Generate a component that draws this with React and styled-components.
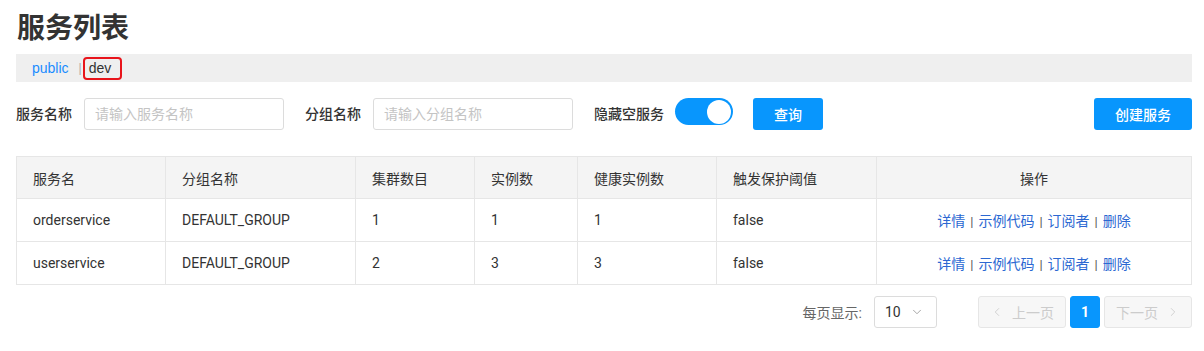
import React from 'react';
import styled, { createGlobalStyle } from 'styled-components';
import { ChevronDown, ChevronLeft, ChevronRight } from 'lucide-react';

const GlobalStyle = createGlobalStyle`
  body {
    margin: 0;
    background: #fff;
    font-family: Roboto, "Noto Sans CJK SC", sans-serif;
    color: #333;
  }
`;

const Page = styled.div`
  padding: 8px 12px 0 16px;
`;

const Title = styled.h1`
  margin: 0 0 10px 1px;
  font-size: 28px;
  line-height: 36px;
  font-weight: bold;
  color: #333;
  font-family: "Noto Sans CJK SC", sans-serif;
`;

const NamespaceBar = styled.div`
  display: flex;
  align-items: center;
  height: 28px;
  background: #efefef;
  padding-left: 16px;
  font-family: "Liberation Sans", "Noto Sans CJK SC", sans-serif;
  font-size: 14px;
`;

const NsLink = styled.span`
  color: ${p => (p.$active ? '#333' : '#1a8cff')};
  line-height: 19px;
  border: ${p => (p.$active ? '2px solid #e8141b' : 'none')};
  border-radius: 4px;
  padding: ${p => (p.$active ? '0 9px 0 4px' : '0')};
`;

const NsSep = styled.span`
  color: #aaa;
  font-size: 12px;
  margin: 0 1px 0 10px;
`;

const FilterRow = styled.div`
  display: flex;
  align-items: flex-start;
  margin-top: 16px;
  height: 32px;
`;

const FieldLabel = styled.label`
  font-size: 14px;
  line-height: 32px;
  font-weight: 500;
  color: #333;
  margin-right: ${p => p.$gap || 12}px;
`;

const TextInput = styled.input`
  box-sizing: border-box;
  width: 200px;
  height: 32px;
  border: 1px solid #dcdcdc;
  border-radius: 3px;
  padding: 0 10px;
  font-size: 14px;
  font-family: Roboto, "Noto Sans CJK SC", sans-serif;
  margin-right: 21px;
  outline: none;
  &::placeholder {
    color: #c4c4c4;
  }
`;

const Switch = styled.div`
  box-sizing: border-box;
  width: 58px;
  height: 27px;
  border-radius: 14px;
  background: #0896fd;
  position: relative;
  margin-right: 20px;
  &::after {
    content: '';
    position: absolute;
    right: 2px;
    top: 1.5px;
    width: 24px;
    height: 24px;
    border-radius: 50%;
    background: #fff;
  }
`;

const PrimaryButton = styled.button`
  height: 32px;
  width: ${p => p.$width}px;
  border: none;
  border-radius: 3px;
  background: #0896fd;
  color: #fff;
  font-size: 14px;
  font-weight: 500;
  font-family: "Noto Sans CJK SC", sans-serif;
  padding: 0;
  margin-left: ${p => (p.$right ? 'auto' : '0')};
`;

const Table = styled.table`
  width: 100%;
  margin-top: 26px;
  border-collapse: collapse;
  font-size: 14px;
  color: #333;
`;

const Th = styled.th`
  height: 42px;
  background: #f4f4f4;
  border: 1px solid #e6e6e6;
  font-weight: normal;
  text-align: ${p => (p.$center ? 'center' : 'left')};
  padding: 0 16px;
  width: ${p => p.$width}px;
  box-sizing: border-box;
`;

const Td = styled.td`
  height: 42px;
  border: 1px solid #e6e6e6;
  text-align: ${p => (p.$center ? 'center' : 'left')};
  padding: 0 16px;
`;

const ActionLink = styled.a`
  color: #2c68d2;
  text-decoration: none;
`;

const ActionSep = styled.span`
  color: #555;
  margin: 0 5px;
  font-size: 13px;
`;

const Footer = styled.div`
  display: flex;
  justify-content: flex-end;
  align-items: center;
  margin-top: 11px;
`;

const PageSizeLabel = styled.span`
  font-size: 14px;
  color: #666;
  margin-right: 12px;
`;

const Select = styled.div`
  box-sizing: border-box;
  display: flex;
  align-items: center;
  justify-content: space-between;
  width: 63px;
  height: 32px;
  border: 1px solid #dcdcdc;
  border-radius: 3px;
  padding: 0 12px 0 10px;
  font-size: 14px;
  color: #333;
  margin-right: 41px;
`;

const Pager = styled.div`
  display: flex;
  gap: 4px;
`;

const PageButton = styled.div`
  box-sizing: border-box;
  display: flex;
  align-items: center;
  justify-content: center;
  gap: 8px;
  height: 32px;
  width: ${p => p.$width}px;
  border-radius: 3px;
  font-size: 14px;
  border: 1px solid ${p => (p.$current ? '#0896fd' : '#e6e6e6')};
  background: ${p => (p.$current ? '#0896fd' : '#f7f7f7')};
  color: ${p => (p.$current ? '#fff' : '#ccc')};
  font-weight: ${p => (p.$current ? 'bold' : 'normal')};
`;

const rows = [
  { name: 'orderservice', group: 'DEFAULT_GROUP', clusters: 1, instances: 1, healthy: 1, threshold: 'false' },
  { name: 'userservice', group: 'DEFAULT_GROUP', clusters: 2, instances: 3, healthy: 3, threshold: 'false' },
];

const actions = ['详情', '示例代码', '订阅者', '删除'];

export default function App() {
  return (
    <Page>
      <GlobalStyle />
      <Title>服务列表</Title>
      <NamespaceBar>
        <NsLink>public</NsLink>
        <NsSep>|</NsSep>
        <NsLink $active>dev</NsLink>
      </NamespaceBar>

      <FilterRow>
        <FieldLabel>服务名称</FieldLabel>
        <TextInput placeholder="请输入服务名称" />
        <FieldLabel>分组名称</FieldLabel>
        <TextInput placeholder="请输入分组名称" />
        <FieldLabel $gap={11}>隐藏空服务</FieldLabel>
        <Switch />
        <PrimaryButton $width={70}>查询</PrimaryButton>
        <PrimaryButton $width={98} $right>创建服务</PrimaryButton>
      </FilterRow>

      <Table>
        <thead>
          <tr>
            <Th $width={149}>服务名</Th>
            <Th $width={190}>分组名称</Th>
            <Th $width={119}>集群数目</Th>
            <Th $width={103}>实例数</Th>
            <Th $width={139}>健康实例数</Th>
            <Th $width={160}>触发保护阈值</Th>
            <Th $center>操作</Th>
          </tr>
        </thead>
        <tbody>
          {rows.map(r => (
            <tr key={r.name}>
              <Td>{r.name}</Td>
              <Td>{r.group}</Td>
              <Td>{r.clusters}</Td>
              <Td>{r.instances}</Td>
              <Td>{r.healthy}</Td>
              <Td>{r.threshold}</Td>
              <Td $center>
                {actions.map((a, i) => (
                  <React.Fragment key={a}>
                    {i > 0 && <ActionSep>|</ActionSep>}
                    <ActionLink href="#">{a}</ActionLink>
                  </React.Fragment>
                ))}
              </Td>
            </tr>
          ))}
        </tbody>
      </Table>

      <Footer>
        <PageSizeLabel>每页显示:</PageSizeLabel>
        <Select>
          <span>10</span>
          <ChevronDown size={14} strokeWidth={1.5} color="#999" />
        </Select>
        <Pager>
          <PageButton $width={88}>
            <ChevronLeft size={14} strokeWidth={1.5} />
            上一页
          </PageButton>
          <PageButton $width={30} $current>1</PageButton>
          <PageButton $width={88}>
            下一页
            <ChevronRight size={14} strokeWidth={1.5} />
          </PageButton>
        </Pager>
      </Footer>
    </Page>
  );
}
